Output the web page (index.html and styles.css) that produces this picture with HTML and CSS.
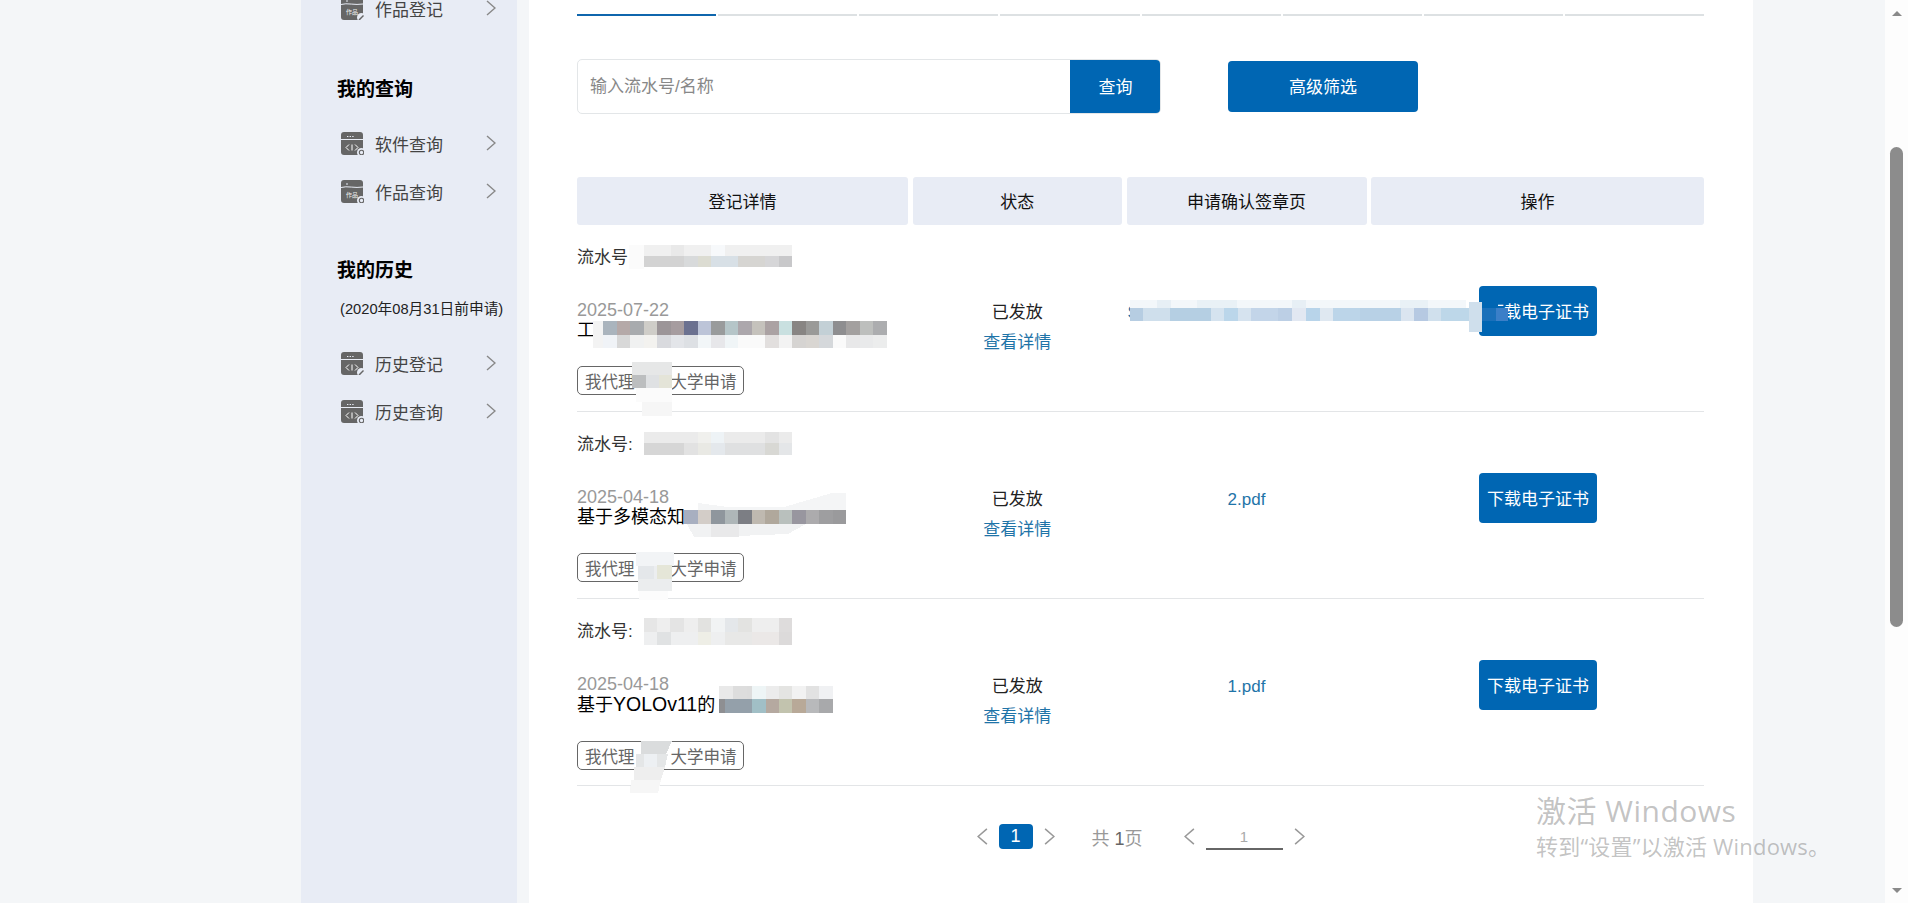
FILE: index.html
```html
<!DOCTYPE html>
<html lang="zh-CN">
<head>
<meta charset="utf-8">
<title>我的登记</title>
<link rel="stylesheet" href="styles.css">
</head>
<body>
<svg class="defs" width="0" height="0" aria-hidden="true">
  <defs>
    <symbol id="win-code" viewBox="0 0 23 23">
      <path fill="#666" d="M3 0h16a3 3 0 0 1 3 3v17a3 3 0 0 1-3 3H3a3 3 0 0 1-3-3V3a3 3 0 0 1 3-3z"/>
      <rect y="7" width="22" height="1" fill="#e8ecf5"/>
      <path fill="#e8ecf5" d="M6 4h1.4v1H6zM8.6 4H10v1H8.6zM11.2 4h1.4v1h-1.4z"/>
      <path fill="none" stroke="#fff" stroke-width="1" d="M8 12.5 5 15.500l3 3M14 12.500l3 3-3 3M11 12.500v6"/>
    </symbol>
    <symbol id="win-work" viewBox="0 0 23 23">
      <path fill="#666" d="M3 0h16a3 3 0 0 1 3 3v17a3 3 0 0 1-3 3H3a3 3 0 0 1-3-3V3a3 3 0 0 1 3-3z"/>
      <path fill="none" stroke="#e8ecf5" d="M0 7.500c6-2 14 1 22-.5"/>
      <rect x="5" y="3.500" width="2" height="1" fill="#e8ecf5"/>
    </symbol>
    <symbol id="badge-search" viewBox="0 0 23 23">
      <circle cx="20.500" cy="20.500" r="4.500" fill="#e8ecf5"/>
      <circle cx="20.500" cy="20.500" r="2.200" fill="none" stroke="#666" stroke-width="1.100"/>
    </symbol>
    <symbol id="badge-pen" viewBox="0 0 23 23">
      <circle cx="20.500" cy="20.500" r="4.500" fill="#e8ecf5"/>
      <path fill="none" stroke="#666" stroke-width="1.500" d="M18 23l4.500-4.500"/>
    </symbol>
    <symbol id="chev-r" viewBox="0 0 10 16">
      <path fill="none" stroke="currentColor" stroke-width="1.400" d="M1 1l8 7-8 7"/>
    </symbol>
    <symbol id="chev-l" viewBox="0 0 10 16">
      <path fill="none" stroke="currentColor" stroke-width="1.400" d="M9 1 1 8l8 7"/>
    </symbol>
  </defs>
</svg>

<div class="page">
  <aside class="sidebar">
    <a class="nav-item">
      <span class="nav-icon"><svg viewBox="0 0 23 23"><use href="#win-work"/><text class="icon-label" x="11" y="17">作品</text><use href="#badge-pen"/></svg></span>
      <span>作品登记</span>
      <svg class="nav-chev"><use href="#chev-r"/></svg>
    </a>
    <h3 class="nav-title nav-title-query">我的查询</h3>
    <a class="nav-item nav-first">
      <span class="nav-icon"><svg viewBox="0 0 23 23"><use href="#win-code"/><use href="#badge-search"/></svg></span>
      <span>软件查询</span>
      <svg class="nav-chev"><use href="#chev-r"/></svg>
    </a>
    <a class="nav-item">
      <span class="nav-icon"><svg viewBox="0 0 23 23"><use href="#win-work"/><text class="icon-label" x="11" y="17">作品</text><use href="#badge-search"/></svg></span>
      <span>作品查询</span>
      <svg class="nav-chev"><use href="#chev-r"/></svg>
    </a>
    <h3 class="nav-title nav-title-history">我的历史</h3>
    <p class="nav-note">(2020年08月31日前申请)</p>
    <a class="nav-item">
      <span class="nav-icon"><svg viewBox="0 0 23 23"><use href="#win-code"/><use href="#badge-pen"/></svg></span>
      <span>历史登记</span>
      <svg class="nav-chev"><use href="#chev-r"/></svg>
    </a>
    <a class="nav-item">
      <span class="nav-icon"><svg viewBox="0 0 23 23"><use href="#win-code"/><use href="#badge-search"/></svg></span>
      <span>历史查询</span>
      <svg class="nav-chev"><use href="#chev-r"/></svg>
    </a>
  </aside>

  <main class="content">
    <div class="tabs">
      <span class="tab tab-active"></span><span class="tab"></span><span class="tab"></span><span class="tab"></span>
      <span class="tab"></span><span class="tab"></span><span class="tab"></span><span class="tab"></span>
    </div>

    <div class="search-row">
      <div class="search-box">
        <div class="search-input">输入流水号/名称</div>
        <button class="btn search-btn">查询</button>
      </div>
      <button class="btn filter-btn">高级筛选</button>
    </div>

    <div class="table-grid table-head">
      <div class="head-cell">登记详情</div>
      <div class="head-cell">状态</div>
      <div class="head-cell">申请确认签章页</div>
      <div class="head-cell">操作</div>
    </div>

    <section class="record">
      <div class="record-no">流水号:</div>
      <div class="table-grid">
        <div class="detail">
          <div class="date">2025-07-22</div>
          <div class="name">工</div>
          <div class="tag">我代理<span class="tag-gap"></span>大学申请</div>
        </div>
        <div class="status"><div>已发放</div><a class="link status-link">查看详情</a></div>
        <div class="file file-long"><a class="link">S</a></div>
        <div class="action"><button class="btn cert-btn">下载电子证书</button></div>
      </div>
    </section>

    <section class="record">
      <div class="record-no">流水号:</div>
      <div class="table-grid">
        <div class="detail">
          <div class="date">2025-04-18</div>
          <div class="name">基于多模态知</div>
          <div class="tag">我代理<span class="tag-gap"></span>大学申请</div>
        </div>
        <div class="status"><div>已发放</div><a class="link status-link">查看详情</a></div>
        <div class="file"><a class="link">2.pdf</a></div>
        <div class="action"><button class="btn cert-btn">下载电子证书</button></div>
      </div>
    </section>

    <section class="record">
      <div class="record-no">流水号:</div>
      <div class="table-grid">
        <div class="detail">
          <div class="date">2025-04-18</div>
          <div class="name">基于<span class="name-latin">YOLOv11</span>的</div>
          <div class="tag">我代理<span class="tag-gap"></span>大学申请</div>
        </div>
        <div class="status"><div>已发放</div><a class="link status-link">查看详情</a></div>
        <div class="file"><a class="link">1.pdf</a></div>
        <div class="action"><button class="btn cert-btn">下载电子证书</button></div>
      </div>
    </section>

    <nav class="pager">
      <svg class="pager-chev"><use href="#chev-l"/></svg>
      <span class="pager-current">1</span>
      <svg class="pager-chev"><use href="#chev-r"/></svg>
      <span class="pager-total">共 <b>1</b>页</span>
      <svg class="pager-chev"><use href="#chev-l"/></svg>
      <span class="pager-input">1</span>
      <svg class="pager-chev"><use href="#chev-r"/></svg>
    </nav>
  </main>

  <div class="fake-scrollbar">
    <span class="arrow-up"></span>
    <span class="thumb"></span>
    <span class="arrow-down"></span>
  </div>
</div>

<svg class="redactions" viewBox="0 0 1908 903" aria-hidden="true">
  <!-- row 1 serial -->
  <g>
    <rect x="629" y="245" width="15" height="24" fill="#fbfbfb"/>
    <rect x="644" y="245" width="148" height="11" fill="#f0f0f0"/>
    <rect x="671" y="245" width="13" height="11" fill="#e9e9e9"/>
    <rect x="711" y="245" width="14" height="11" fill="#f7f9fb"/>
    <rect x="644" y="256" width="40" height="11" fill="#d3d3d3"/>
    <rect x="684" y="256" width="14" height="11" fill="#d8dadb"/>
    <rect x="698" y="256" width="13" height="11" fill="#dcdcd2"/>
    <rect x="711" y="256" width="27" height="11" fill="#d8e0e6"/>
    <rect x="738" y="256" width="27" height="11" fill="#d6d5d2"/>
    <rect x="765" y="256" width="14" height="11" fill="#d6d6d8"/>
    <rect x="779" y="256" width="13" height="11" fill="#c8c8ca"/>
  </g>
  <!-- row 1 title -->
  <g>
    <rect x="593" y="321" width="10" height="27" fill="#f3f3f3"/>
    <rect x="603" y="321" width="14" height="14" fill="#aab4bd"/><rect x="617" y="321" width="13" height="14" fill="#b5a9a8"/><rect x="630" y="321" width="14" height="14" fill="#a8abae"/><rect x="644" y="321" width="13" height="14" fill="#cfcdc8"/><rect x="657" y="321" width="14" height="14" fill="#9c9598"/><rect x="671" y="321" width="13" height="14" fill="#a69c9f"/><rect x="684" y="321" width="14" height="14" fill="#6b7190"/><rect x="698" y="321" width="13" height="14" fill="#bcc4d8"/><rect x="711" y="321" width="14" height="14" fill="#999b9c"/><rect x="725" y="321" width="13" height="14" fill="#b5c5c8"/><rect x="738" y="321" width="14" height="14" fill="#aca7ac"/><rect x="752" y="321" width="13" height="14" fill="#c5c2bc"/><rect x="765" y="321" width="14" height="14" fill="#aba2a3"/><rect x="779" y="321" width="13" height="14" fill="#c9e0e0"/><rect x="792" y="321" width="14" height="14" fill="#888583"/><rect x="806" y="321" width="13" height="14" fill="#9a9a98"/><rect x="819" y="321" width="14" height="14" fill="#c3d0d6"/><rect x="833" y="321" width="13" height="14" fill="#8e8e90"/><rect x="846" y="321" width="14" height="14" fill="#a3a09f"/><rect x="860" y="321" width="13" height="14" fill="#bdbfbd"/><rect x="873" y="321" width="14" height="14" fill="#acadaf"/>
    <rect x="603" y="335" width="14" height="13" fill="#f0f3f7"/><rect x="617" y="335" width="13" height="13" fill="#d8d8d8"/><rect x="630" y="335" width="14" height="13" fill="#f0f1f1"/><rect x="644" y="335" width="13" height="13" fill="#f3f2ef"/><rect x="657" y="335" width="14" height="13" fill="#d9dade"/><rect x="671" y="335" width="13" height="13" fill="#e3e5e9"/><rect x="684" y="335" width="14" height="13" fill="#dde0e4"/><rect x="698" y="335" width="13" height="13" fill="#f2f6f8"/><rect x="711" y="335" width="14" height="13" fill="#e7e7ea"/><rect x="725" y="335" width="13" height="13" fill="#f0f5f7"/><rect x="738" y="335" width="27" height="13" fill="#fafafa"/><rect x="765" y="335" width="14" height="13" fill="#e2dfde"/><rect x="779" y="335" width="13" height="13" fill="#f3f3f3"/><rect x="792" y="335" width="14" height="13" fill="#d6d4d2"/><rect x="806" y="335" width="13" height="13" fill="#d9d6d2"/><rect x="819" y="335" width="14" height="13" fill="#d5d8db"/><rect x="833" y="335" width="13" height="13" fill="#fafafa"/><rect x="846" y="335" width="14" height="13" fill="#e8e8e9"/><rect x="860" y="335" width="13" height="13" fill="#e9eaeb"/><rect x="873" y="335" width="14" height="13" fill="#eceded"/>
  </g>
  <!-- row 1 tag -->
  <g>
    <rect x="632" y="362" width="40" height="13" fill="#e6e7e7"/>
    <rect x="632" y="375" width="14" height="13" fill="#bcbebf"/><rect x="646" y="375" width="13" height="13" fill="#dfe1e3"/><rect x="659" y="375" width="13" height="13" fill="#e4e4d8"/>
    <rect x="636" y="388" width="36" height="14" fill="#fbfbfb"/>
    <rect x="642" y="402" width="30" height="14" fill="#f6f6f6"/>
  </g>
  <!-- row 1 file -->
  <g>
    <rect x="1130" y="300" width="336" height="8" fill="#f3f7fa"/>
    <rect x="1157" y="300" width="14" height="8" fill="#e7eff5"/><rect x="1197" y="300" width="40" height="8" fill="#e9f1f6"/><rect x="1292" y="300" width="14" height="8" fill="#e7eff5"/><rect x="1400" y="300" width="28" height="8" fill="#e9f1f6"/>
    <rect x="1130" y="308" width="13" height="13" fill="#b6cde2"/><rect x="1143" y="308" width="27" height="13" fill="#cfdfec"/><rect x="1170" y="308" width="41" height="13" fill="#b5cfe3"/><rect x="1211" y="308" width="13" height="13" fill="#d5e3ef"/><rect x="1224" y="308" width="14" height="13" fill="#bbd6ea"/><rect x="1238" y="308" width="13" height="13" fill="#d6e3ef"/><rect x="1251" y="308" width="27" height="13" fill="#c3d5e9"/><rect x="1278" y="308" width="14" height="13" fill="#bccfe5"/><rect x="1292" y="308" width="14" height="13" fill="#e2e8f2"/><rect x="1306" y="308" width="14" height="13" fill="#b8d4ea"/><rect x="1320" y="308" width="13" height="13" fill="#dfe8f1"/><rect x="1333" y="308" width="27" height="13" fill="#bcd5e9"/><rect x="1360" y="308" width="41" height="13" fill="#b8d1e6"/><rect x="1401" y="308" width="13" height="13" fill="#dbe5f0"/><rect x="1414" y="308" width="14" height="13" fill="#b6c9e2"/><rect x="1428" y="308" width="13" height="13" fill="#d0e0ed"/><rect x="1441" y="308" width="28" height="13" fill="#bdd7e9"/>
    <rect x="1469" y="302" width="13" height="30" fill="#cfdfec"/>
    <rect x="1482" y="298" width="16" height="10" fill="#0066b3"/>
    <rect x="1482" y="308" width="14" height="13" fill="#1a70ba"/>
    <rect x="1496" y="308" width="12" height="13" fill="#3b7fc8"/>
  </g>
  <!-- row 2 serial -->
  <g>
    <rect x="644" y="432" width="148" height="11" fill="#ebebeb"/>
    <rect x="698" y="432" width="13" height="11" fill="#f0f0ed"/><rect x="711" y="432" width="13" height="11" fill="#eef3f6"/><rect x="765" y="432" width="14" height="11" fill="#e3e3e3"/>
    <rect x="644" y="443" width="40" height="12" fill="#d6d6d6"/><rect x="684" y="443" width="14" height="12" fill="#e2e2e2"/><rect x="698" y="443" width="13" height="12" fill="#e9e9e4"/><rect x="711" y="443" width="14" height="12" fill="#e4e8ec"/><rect x="725" y="443" width="40" height="12" fill="#dfe0e1"/><rect x="765" y="443" width="14" height="12" fill="#d8d8d4"/><rect x="779" y="443" width="13" height="12" fill="#e4e6e8"/>
  </g>
  <!-- row 2 title -->
  <g>
    <path d="M698 503l30 4 56 0 48-14 14 0 0 17-148 0z" fill="#f4f5f6"/>
    <rect x="684" y="510" width="14" height="14" fill="#a8afc0"/><rect x="698" y="510" width="13" height="14" fill="#d3cdc8"/><rect x="711" y="510" width="14" height="14" fill="#8f969d"/><rect x="725" y="510" width="13" height="14" fill="#aeb6b8"/><rect x="738" y="510" width="14" height="14" fill="#7c7e84"/><rect x="752" y="510" width="13" height="14" fill="#bfb9b0"/><rect x="765" y="510" width="14" height="14" fill="#b0a89c"/><rect x="779" y="510" width="13" height="14" fill="#b9c0bd"/><rect x="792" y="510" width="14" height="14" fill="#98969f"/><rect x="806" y="510" width="13" height="14" fill="#acabad"/><rect x="819" y="510" width="14" height="14" fill="#9e9ea0"/><rect x="833" y="510" width="13" height="14" fill="#9a9a9c"/>
    <path d="M687 524h119l-18 10-76 3-18 0z" fill="#f1f2f3"/>
    <rect x="711" y="524" width="28" height="13" fill="#e9e9ea"/>
  </g>
  <!-- row 2 tag -->
  <g>
    <rect x="636" y="552" width="38" height="14" fill="#f2f4f6"/>
    <rect x="638" y="566" width="16" height="14" fill="#e4e7ea"/><rect x="654" y="566" width="6" height="14" fill="#eceef0"/><rect x="657" y="565" width="15" height="14" fill="#e5e6d8"/>
    <rect x="638" y="579" width="34" height="12" fill="#ebedee"/>
    <rect x="639" y="591" width="29" height="9" fill="#fcfcfc"/>
  </g>
  <!-- row 3 serial -->
  <g>
    <rect x="644" y="618" width="148" height="14" fill="#eeeeee"/>
    <rect x="644" y="618" width="13" height="14" fill="#e6e6e6"/><rect x="670" y="618" width="14" height="14" fill="#e4e4e4"/><rect x="698" y="618" width="13" height="14" fill="#e2e2e0"/><rect x="711" y="618" width="14" height="14" fill="#f1f3f4"/><rect x="725" y="618" width="13" height="14" fill="#e4e7ea"/><rect x="738" y="618" width="14" height="14" fill="#e3e3e1"/><rect x="779" y="618" width="13" height="14" fill="#dedcdc"/>
    <rect x="644" y="632" width="148" height="13" fill="#eeeff0"/>
    <rect x="657" y="632" width="14" height="13" fill="#e0e2e3"/><rect x="698" y="632" width="13" height="13" fill="#eeeee6"/><rect x="725" y="632" width="27" height="13" fill="#e8e8e7"/><rect x="752" y="632" width="27" height="13" fill="#ebe8e7"/><rect x="779" y="632" width="13" height="13" fill="#dcdada"/>
  </g>
  <!-- row 3 title -->
  <g>
    <rect x="719" y="686" width="14" height="13" fill="#e9e9e9"/>
    <rect x="733" y="686" width="14" height="13" fill="#dddddd"/><rect x="747" y="686" width="13" height="13" fill="#dcdcdc"/><rect x="752" y="686" width="14" height="13" fill="#eef5f6"/><rect x="766" y="686" width="13" height="13" fill="#ececec"/><rect x="779" y="686" width="13" height="13" fill="#e4e4e2"/><rect x="792" y="686" width="14" height="13" fill="#f2f2f2"/><rect x="806" y="686" width="13" height="13" fill="#e2e2e2"/><rect x="819" y="686" width="14" height="13" fill="#f0f1f3"/>
    <rect x="719" y="699" width="14" height="14" fill="#8e8f92"/><rect x="725" y="699" width="27" height="14" fill="#94a0aa"/><rect x="752" y="699" width="14" height="14" fill="#a1bfc6"/><rect x="766" y="699" width="13" height="14" fill="#b5a9a0"/><rect x="779" y="699" width="13" height="14" fill="#c2c3ae"/><rect x="792" y="699" width="14" height="14" fill="#b8a998"/><rect x="806" y="699" width="13" height="14" fill="#b8b9bb"/><rect x="819" y="699" width="14" height="14" fill="#a8a9ab"/>
  </g>
  <!-- row 3 tag -->
  <g>
    <path d="M641 741h31l-6 13h-25z" fill="#dadcdd"/>
    <path d="M636 754h32l-3 13h-29z" fill="#e4e6e7"/>
    <rect x="644" y="754" width="13" height="13" fill="#edf0f3"/>
    <path d="M634 767h31l-4 13h-27z" fill="#eeeeee"/>
    <path d="M631 780h30l-3 13h-28z" fill="#f6f6f6"/>
  </g>
</svg>

<div class="activation">
  <div class="activation-title">激活 Windows</div>
  <div class="activation-sub">转到“设置”以激活 Windows。</div>
</div>
</body>
</html>
```

FILE: styles.css
```css
* { box-sizing: border-box; }

html, body {
  margin: 0;
  height: 903px;
  overflow: hidden;
}

body {
  font-family: "Liberation Sans", "Noto Sans CJK SC", sans-serif;
  font-size: 17px;
  color: #222;
  background: #f4f6f8;
}

.defs { position: absolute; }

.page {
  display: flex;
  height: 903px;
  padding-left: 301px;
}

/* Sidebar */
.sidebar {
  flex: 0 0 216px;
  min-width: 0;
  background: #e8ecf5;
  margin-top: -16px;
  margin-bottom: -16px;
  padding: 0 21px 0 0;
  color: #444;
}

.nav-item {
  display: flex;
  align-items: center;
  height: 48px;
  padding-left: 40px;
}

.nav-icon {
  flex: 0 0 23px;
  width: 23px;
  height: 23px;
  margin-right: 11px;
}

.nav-icon svg {
  display: block;
  width: 23px;
  height: 23px;
  overflow: visible;
}

.icon-label {
  font-size: 6px;
  fill: #f0f0f0;
  text-anchor: middle;
}

.nav-chev {
  width: 10px;
  height: 16px;
  margin-left: auto;
  color: #888;
}

.nav-title {
  margin: 0;
  padding-left: 36px;
  font-size: 19px;
  line-height: 24px;
  font-weight: 700;
  color: #000;
}

.nav-title-query { margin-top: 46px; }
.nav-title-history { margin-top: 44px; }
.nav-first { margin-top: 17px; }

.nav-note {
  margin: 16px 0 20px;
  padding-left: 39px;
  font-size: 14.700px;
  line-height: 20px;
  color: #222;
  white-space: nowrap;
}

/* Main */
.content {
  flex: 0 0 1224px;
  margin-left: 12px;
  padding: 14px 49px 0 48px;
  background: #fff;
}

.tabs {
  display: grid;
  grid-template-columns: repeat(8, 1fr);
  gap: 2px;
}

.tab {
  height: 2px;
  background: #dde1e3;
}

.tab-active { background: #0f66ad; }

.search-row {
  display: flex;
  align-items: center;
  margin-top: 43px;
}

.search-box {
  display: flex;
  width: 584px;
  height: 55px;
  border: 1px solid #e3e6e8;
  border-radius: 5px;
  overflow: hidden;
}

.search-input {
  flex: 1;
  padding-left: 12px;
  line-height: 53px;
  color: #888;
}

.btn {
  border: 0;
  padding: 0;
  font: inherit;
  color: #fff;
  background: #0066b3;
  white-space: nowrap;
}

.search-btn {
  width: 91px;
  margin: -1px;
  padding-bottom: 3px;
}

.filter-btn {
  width: 190px;
  height: 51px;
  margin-left: 67px;
  padding-bottom: 2px;
  border-radius: 4px;
}

.table-grid {
  display: grid;
  grid-template-columns: 331px 209.500px 240px 333px;
  column-gap: 4.500px;
}

.table-head { margin-top: 63px; }

.head-cell {
  height: 48px;
  line-height: 51px;
  text-align: center;
  color: #111;
  background: #e8ecf5;
  border-radius: 3px;
}

.record {
  height: 187px;
  padding-top: 21px;
  border-bottom: 1px solid #e3e5e7;
}

.record-no {
  line-height: 24px;
  color: #333;
  margin-bottom: 16px;
}

.detail { padding-top: 14px; }

.date {
  font-size: 18px;
  line-height: 20px;
  color: #999;
}

.name {
  font-size: 18px;
  line-height: 21px;
  color: #000;
}

.name-latin { font-size: 19.500px; }

.tag {
  display: inline-flex;
  align-items: center;
  height: 29px;
  margin-top: 25px;
  padding: 0 6px 0 7px;
  font-size: 16.500px;
  color: #666;
  border: 1px solid #666;
  border-radius: 5px;
}

.tag-gap { width: 36px; }

.status,
.file {
  padding-top: 14px;
  line-height: 26px;
  text-align: center;
}

.status-link {
  display: block;
  margin-top: 4px;
}

.link { color: #1f74a8; }

.file-long {
  text-align: left;
  padding-left: 1px;
}

.action { padding-left: 108px; }

.cert-btn {
  display: block;
  width: 118px;
  height: 50px;
  padding-bottom: 2px;
  border-radius: 4px;
  font-size: 17px;
}

/* Pager */
.pager {
  display: flex;
  align-items: center;
  justify-content: center;
  height: 25px;
  margin-top: 38px;
  color: #999;
}

.pager-chev {
  flex: 0 0 11px;
  width: 11px;
  height: 19px;
  color: #999;
}

.pager-current {
  width: 34px;
  height: 25px;
  margin: 0 11px;
  line-height: 25px;
  text-align: center;
  color: #fff;
  font-size: 18px;
  background: #0066b3;
  border-radius: 4px;
}

.pager-total {
  width: 56px;
  margin: 0 36px 0 37px;
  font-size: 18px;
  white-space: nowrap;
}

.pager-total b {
  font-weight: 400;
  color: #666;
}

.pager-input {
  width: 77px;
  height: 25px;
  margin: 0 11px;
  line-height: 24px;
  text-align: center;
  font-size: 15px;
  color: #aaa;
  border-bottom: 2px solid #666;
  align-self: flex-end;
  position: relative;
  top: 1px;
}

/* Scrollbar */
.fake-scrollbar {
  display: flex;
  flex-direction: column;
  align-items: center;
  flex: 0 0 23px;
  margin-left: auto;
  padding: 11px 0 10px;
  background: #fdfdfd;
}

.arrow-up,
.arrow-down {
  width: 0;
  height: 0;
  border-left: 5.500px solid transparent;
  border-right: 5.500px solid transparent;
}

.arrow-up { border-bottom: 5px solid #8a8a8a; }
.arrow-down { border-top: 5px solid #8a8a8a; margin-top: auto; }

.thumb {
  width: 13px;
  height: 480px;
  margin-top: 131px;
  background: #8c8c8c;
  border-radius: 7px;
}

/* Overlays */
.redactions {
  position: absolute;
  left: 0;
  top: 0;
  width: 1908px;
  height: 903px;
  pointer-events: none;
  shape-rendering: crispEdges;
}

.activation {
  position: absolute;
  left: 1536px;
  top: 792px;
  color: rgba(110, 110, 110, 0.42);
  font-family: "Open Sans", "Noto Sans CJK SC", sans-serif;
  white-space: nowrap;
  pointer-events: none;
}

.activation-title {
  font-size: 30px;
  line-height: 38px;
  letter-spacing: 0.500px;
}

.activation-sub {
  font-size: 22px;
  line-height: 32px;
  letter-spacing: 0.200px;
}
```
